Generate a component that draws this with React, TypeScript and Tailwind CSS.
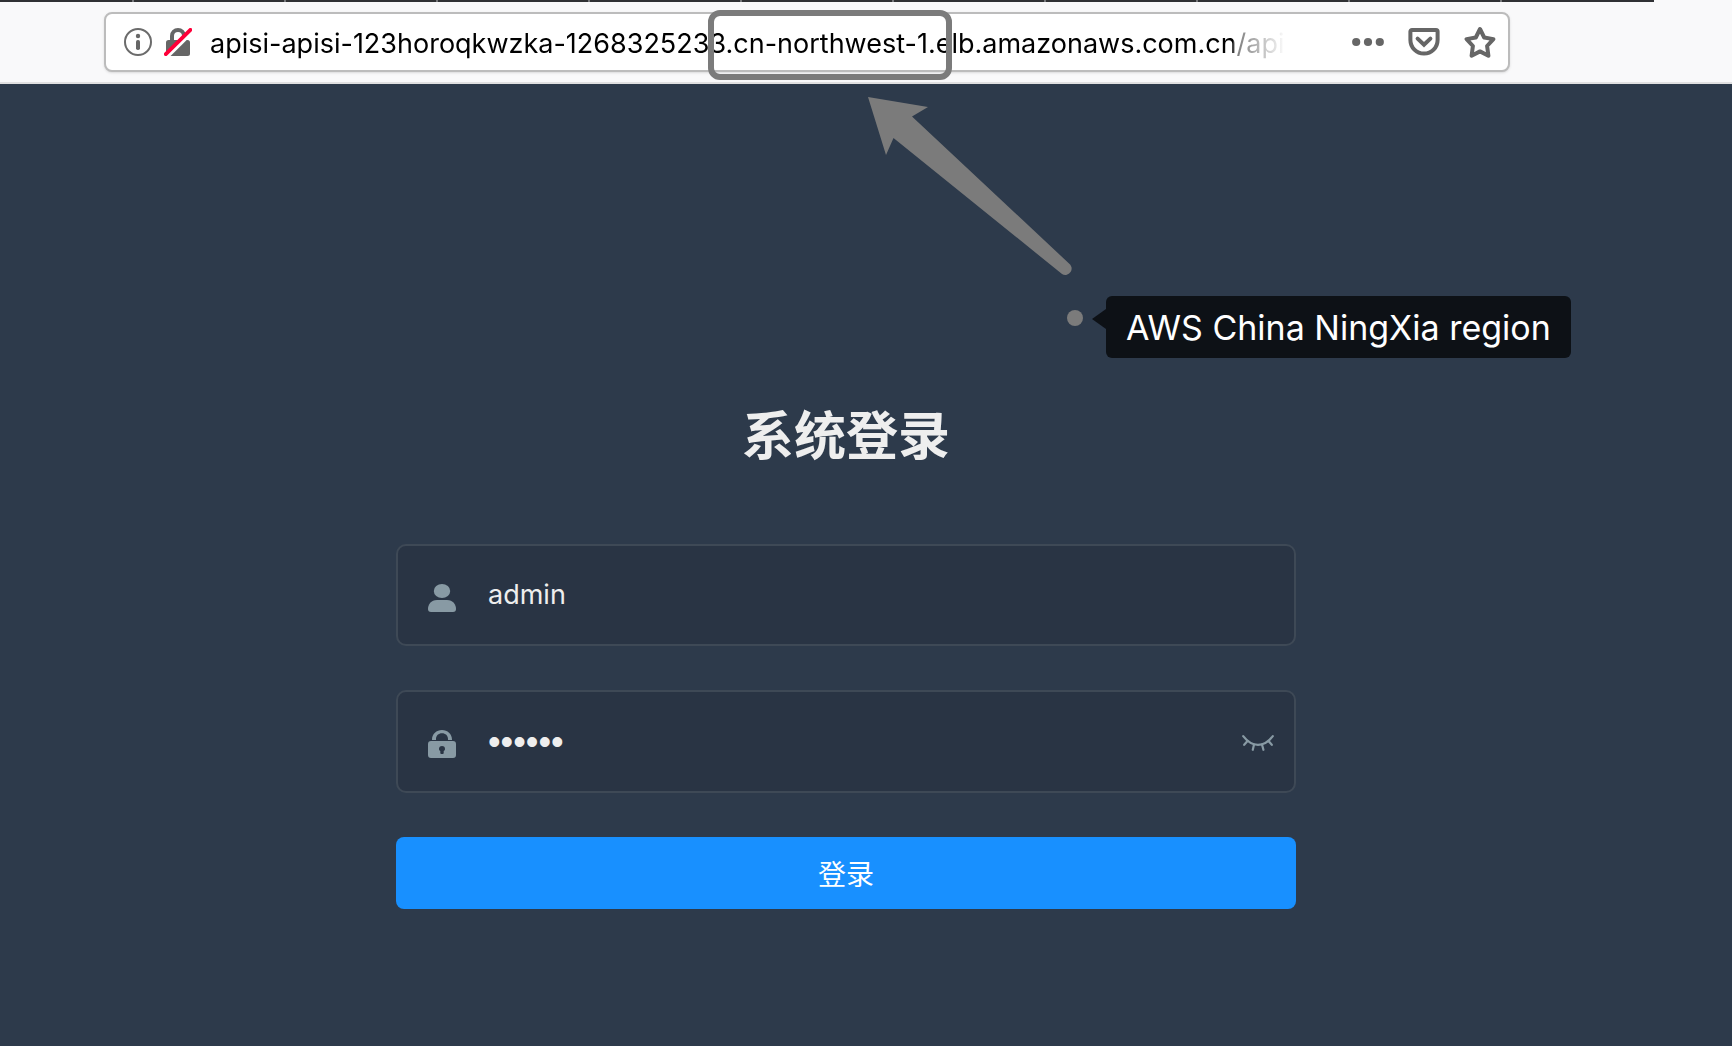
import { useState } from "react";

const TABS = [0, 1, 2, 3, 4, 5, 6, 7, 8];

function InfoIcon() {
  return (
    <svg viewBox="0 0 28 28" className="size-7" aria-hidden="true">
      <circle cx="14" cy="14" r="13" fill="none" stroke="#6b6b6b" strokeWidth="2" />
      <circle cx="14" cy="8" r="2.2" fill="#666" />
      <rect x="12" y="12" width="4" height="10" rx="1.8" fill="#666" />
    </svg>
  );
}

function InsecureLockIcon() {
  return (
    <svg viewBox="0 0 28 28" className="size-7" aria-hidden="true">
      <path d="M8 13V8a6 6 0 0 1 12 0V13" fill="none" stroke="#666" strokeWidth="4" />
      <rect x="2" y="12" width="24" height="16" rx="2.5" fill="#666" />
      <path d="M3 29 28 4.2" stroke="#fff" strokeWidth="3.6" />
      <path d="M1.8 26.2 26.4 1.8" stroke="#ff0039" strokeWidth="3.8" strokeLinecap="round" />
    </svg>
  );
}

function DotsIcon() {
  return (
    <svg viewBox="0 0 32 32" className="size-8" fill="#666" aria-hidden="true">
      <circle cx="4.2" cy="16" r="4.1" />
      <circle cx="16" cy="16" r="4.1" />
      <circle cx="27.8" cy="16" r="4.1" />
    </svg>
  );
}

function PocketIcon() {
  return (
    <svg viewBox="0 0 32 32" className="size-8" fill="none" stroke="#666" strokeWidth="4" aria-hidden="true">
      <path d="M4 4h24a1.6 1.6 0 0 1 1.6 1.6V14a13.6 13.6 0 0 1-27.2 0V5.6A1.6 1.6 0 0 1 4 4Z" strokeLinejoin="round" />
      <path d="M9.6 12.6 16 18.8l6.4-6.2" strokeLinecap="round" />
    </svg>
  );
}

function StarIcon() {
  return (
    <svg viewBox="0 0 32 32" className="size-8" fill="none" stroke="#666" strokeWidth="4" strokeLinejoin="round" aria-hidden="true">
      <path d="M16 3 20.2 11.5 29.4 13.1 23.1 20 24.4 29.7 16 25.4 7.6 29.7 8.9 20 2.6 13.1 11.8 11.5Z" />
    </svg>
  );
}

function UserIcon() {
  return (
    <svg viewBox="0 0 28 28" className="size-7" fill="#889aa4" aria-hidden="true">
      <ellipse cx="14" cy="7" rx="8.2" ry="7" />
      <path d="M9 16h10c6 0 9 4.5 9 9 0 2-1 3-3 3H3c-2 0-3-1-3-3 0-4.5 3-9 9-9Z" />
    </svg>
  );
}

function LockIcon() {
  return (
    <svg viewBox="0 0 28 28" className="size-7" fill="#889aa4" aria-hidden="true">
      <path d="M4 10V9.5C4 4 8.5 0 14 0s10 4 10 9.5V10h-4V9c0-3.5-2.5-5.8-6-5.8S8 5.5 8 9v1Z" />
      <path
        fillRule="evenodd"
        d="M3 11h22a3 3 0 0 1 3 3v11a3 3 0 0 1-3 3H3a3 3 0 0 1-3-3V14a3 3 0 0 1 3-3Zm11 5a3 3 0 0 0-3 3c0 1 .6 1.7 1.3 2.1V23q0 1 1 1h1.4q1 0 1-1v-1.9c.7-.4 1.3-1.1 1.3-2.1a3 3 0 0 0-3-3Z"
      />
    </svg>
  );
}

function ClosedEyeIcon() {
  return (
    <svg viewBox="0 0 32 16" className="h-4 w-8" fill="none" stroke="#889aa4" strokeWidth="2.2" strokeLinecap="round" aria-hidden="true">
      <path d="M1.2 1.2C4.5 5.5 9.5 9.8 16 9.8S27.5 5.5 30.8 1.2" />
      <path d="M5.5 6 2.2 9.8M12 9.5 10.8 14.8M20 9.5l1.4 5.3M26.5 6l3.3 3.8" />
    </svg>
  );
}

function AddressBar() {
  return (
    <header className="border-b-2 border-[#e0e0e1] bg-[#f9f9fa]">
      <div className="mr-[78px] flex h-[2px] overflow-hidden bg-[#303134]">
        <div className="w-[134px] shrink-0 border-r-2 border-[#77787b]" />
        {TABS.map((tab) => (
          <div key={tab} className="w-[152px] shrink-0 border-r-2 border-[#77787b]" />
        ))}
      </div>
      <div className="pt-[10px] pr-[222px] pb-[10px] pl-[104px]">
        <div className="flex h-[60px] items-center rounded-lg border-2 border-[#bcbcbc] bg-white pr-3 pl-[18px] shadow-sm">
          <button type="button" aria-label="Site information" className="mr-3">
            <InfoIcon />
          </button>
          <button type="button" aria-label="Connection is not secure" className="mr-4">
            <InsecureLockIcon />
          </button>
          <input
            aria-label="Address"
            readOnly
            value="apisi-apisi-123horoqkwzka-1268325233.cn-northwest-1.elb.amazonaws.com.cn/api"
            className="h-11 min-w-0 flex-1 bg-[linear-gradient(90deg,#000_1025px,#777_1026px,#fff_1078px)] bg-clip-text pt-[2px] pl-[2px] text-[27px] text-transparent outline-none"
          />
          <div className="ml-[66px] flex items-center gap-6">
            <button type="button" aria-label="Page actions">
              <DotsIcon />
            </button>
            <button type="button" aria-label="Save to Pocket">
              <PocketIcon />
            </button>
            <button type="button" aria-label="Bookmark this page">
              <StarIcon />
            </button>
          </div>
        </div>
      </div>
    </header>
  );
}

function Annotations() {
  return (
    <>
      <div className="pointer-events-none absolute top-[10px] left-[708px] h-[70px] w-[244px] rounded-xl border-[6px] border-[#7b7b7b]" />
      <svg viewBox="0 0 206 182" className="pointer-events-none absolute top-[96px] left-[867px] h-[182px] w-[206px]" fill="#7b7b7b" aria-hidden="true">
        <path d="M1 1 61 11 45 20.5 201.5 167a6.2 6.2 0 0 1-6.500 11L26.5 42 19 59Z" />
      </svg>
      <div className="absolute top-[310px] left-[1067px] size-4 rounded-full bg-[#7b7b7b]" />
      <div className="absolute top-[296px] left-[1106px] flex h-[62px] items-center rounded-md bg-[#0d1116] px-5 text-[34px] whitespace-nowrap text-white">
        <svg viewBox="0 0 14 20" className="absolute top-[13px] -left-[14px] h-5 w-[14px]" fill="#0d1116" aria-hidden="true">
          <path d="M0 10 14 0V20Z" />
        </svg>
        AWS China NingXia region
      </div>
    </>
  );
}

function LoginForm() {
  const [user, setUser] = useState("admin");
  const [password, setPassword] = useState("secret");
  const [shown, setShown] = useState(false);
  const field = "mb-11 flex items-center rounded-[10px] border-2 border-[#3e4956] bg-[#293444] pr-5 pl-[30px]";
  const input = "h-[94px] min-w-0 flex-1 bg-transparent text-[#eee] outline-none";
  return (
    <form className="mx-auto w-[900px] max-w-full" onSubmit={(e) => e.preventDefault()}>
      <h1 className="mb-[68px] text-center text-[52px] leading-[78px] font-bold text-[#eee]">系统登录</h1>
      <div className={field + " h-[102px]"}>
        <label htmlFor="user" aria-label="Username" className="mr-8 pt-[6px]">
          <UserIcon />
        </label>
        <input id="user" value={user} onChange={(e) => setUser(e.target.value)} className={input + " pb-[2px] text-[27px]"} />
      </div>
      <div className={field + " h-[103px]"}>
        <label htmlFor="password" aria-label="Password" className="mr-8 pt-1">
          <LockIcon />
        </label>
        <input
          id="password"
          type={shown ? "text" : "password"}
          value={password}
          onChange={(e) => setPassword(e.target.value)}
          className={input + (shown ? " text-[27px]" : " font-['Liberation_Sans'] text-[36px]")}
        />
        <button type="button" aria-label="Show password" className="pt-[2px]" onClick={() => setShown(!shown)}>
          <ClosedEyeIcon />
        </button>
      </div>
      <button type="submit" className="h-[72px] w-full rounded-lg bg-[#1890ff] pt-1 text-[28px] text-white">
        登录
      </button>
    </form>
  );
}

export default function App() {
  return (
    <div className="relative flex min-h-screen flex-col overflow-hidden bg-[#2d3a4b] font-[Inter,'Noto_Sans_CJK_SC',sans-serif]">
      <AddressBar />
      <main className="flex-1 pt-[314px] pr-10 pb-10">
        <LoginForm />
      </main>
      <Annotations />
    </div>
  );
}
